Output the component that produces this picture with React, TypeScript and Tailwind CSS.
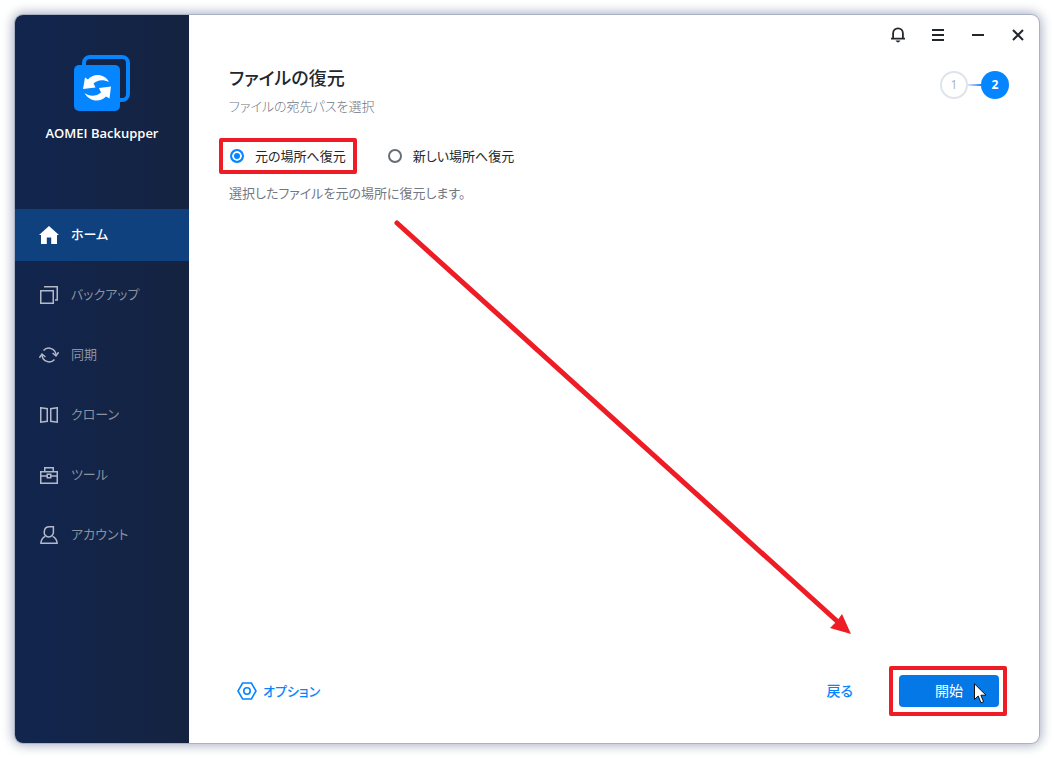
import { useState } from 'react';
import type { ReactNode } from 'react';

type NavEntry = { label: string; icon: ReactNode };

const iconClass = 'h-5 w-5 shrink-0';

const navEntries: NavEntry[] = [
  {
    label: 'ホーム',
    icon: (
      <svg viewBox="0 0 20 20" className={iconClass} fill="currentColor" aria-hidden="true">
        <path d="M10 1 L20 10 H18 V19 H12.2 V12.5 H7.8 V19 H2 V10 H0 Z" />
      </svg>
    ),
  },
  {
    label: 'バックアップ',
    icon: (
      <svg viewBox="0 0 20 20" className={iconClass} fill="none" stroke="currentColor" strokeWidth="1.5" aria-hidden="true">
        <path d="M1.75 5.75 H14.25 V18.25 H1.75 Z M5 1.75 H18.25 V15 H16" />
      </svg>
    ),
  },
  {
    label: '同期',
    icon: (
      <svg viewBox="0 0 20 20" className={iconClass} fill="none" stroke="currentColor" strokeWidth="1.5" aria-hidden="true">
        <path d="M4.5 5.5 A7.2 7.2 0 0 1 17 10 M15.5 14.5 A7.2 7.2 0 0 1 3 10" />
        <path d="M13.6 8 L17 11 L19.6 7.2 M0.4 12.8 L3 9 L6.4 12" />
      </svg>
    ),
  },
  {
    label: 'クローン',
    icon: (
      <svg viewBox="0 0 20 20" className={iconClass} fill="none" stroke="currentColor" strokeWidth="1.5" aria-hidden="true">
        <path d="M1.75 2.75 L8.25 3.75 V16.25 L1.75 17.25 Z M18.25 2.75 L11.75 3.75 V16.25 L18.25 17.25 Z" />
      </svg>
    ),
  },
  {
    label: 'ツール',
    icon: (
      <svg viewBox="0 0 20 20" className={iconClass} fill="none" stroke="currentColor" strokeWidth="1.5" aria-hidden="true">
        <path d="M1.75 6.75 H18.25 V18.25 H1.75 Z M5.75 6.5 V2.75 H14.25 V6.5 M2 11 H8 M12 11 H18 M8.25 9.25 H11.75 V12.75 H8.25 Z" />
      </svg>
    ),
  },
  {
    label: 'アカウント',
    icon: (
      <svg viewBox="0 0 20 20" className={iconClass} fill="none" stroke="currentColor" strokeWidth="1.5" aria-hidden="true">
        <path d="M14.4 1.75 V7 A4.6 4.6 0 1 1 5.3 6.5 Q5.6 1.75 10.5 1.75 Z" />
        <path d="M6.2 11.4 Q2.2 13.5 1.9 18.25 H18.1 Q17.8 13.5 13.6 11.4" />
      </svg>
    ),
  },
];

function Logo() {
  return (
    <svg viewBox="0 0 56 56" className="h-14 w-14" aria-hidden="true">
      <rect x="10" y="2" width="44" height="43" rx="6" fill="none" stroke="#0585ff" strokeWidth="4" />
      <rect x="0" y="10" width="46" height="46" rx="5" fill="#0585ff" />
      <path
        fill="#fff"
        d="M9 34 L11 22.5 L14 24.5 C19 18.5 30 18 35 27 C29 23.800 23 25 19.500 28.5 L21.5 32.5 Z M37 31.5 L35.5 43.5 L32 41.5 C26 48 15 46.5 10.5 38 C16 42 22 41.5 27 37.500 L25 33 Z"
      />
    </svg>
  );
}

function Sidebar() {
  const [active, setActive] = useState('ホーム');
  return (
    <aside className="flex w-[174px] shrink-0 flex-col bg-linear-to-r from-[#11254e] to-[#152340]">
      <div className="flex h-[194px] flex-col items-center pt-10">
        <Logo />
        <p className="mt-3 text-[13px] leading-5 font-semibold text-white">AOMEI Backupper</p>
      </div>
      <nav>
        <ul className="flex flex-col gap-2">
          {navEntries.map(({ label, icon }) => (
            <li key={label}>
              <button
                type="button"
                aria-current={active === label ? 'page' : undefined}
                onClick={() => setActive(label)}
                className={
                  active === label
                    ? 'flex h-13 w-full items-center gap-3 bg-[#0e417d] px-6 text-[13px] font-medium text-white'
                    : 'flex h-13 w-full items-center gap-3 px-6 text-[13px] text-[#8b929f]'
                }
              >
                <span className={active === label ? 'text-white' : 'text-[#b3b9c6]'}>{icon}</span>
                {label}
              </button>
            </li>
          ))}
        </ul>
      </nav>
    </aside>
  );
}

function WindowControls() {
  const button = 'flex h-10 w-10 items-center justify-center text-[#22272e]';
  return (
    <div className="flex justify-end pr-px">
      <button type="button" aria-label="通知" className={button}>
        <svg viewBox="0 0 16 16" className="h-4 w-4" fill="none" stroke="currentColor" strokeWidth="1.8" aria-hidden="true">
          <path d="M3.1 11.5 V6.2 A4.9 4.9 0 0 1 12.9 6.2 V11.5 M1 11.6 H15" />
          <path d="M5.5 13.5 H10.5 L9 15.3 H7 Z" fill="currentColor" stroke="none" />
        </svg>
      </button>
      <button type="button" aria-label="メニュー" className={button}>
        <svg viewBox="0 0 16 16" className="h-4 w-4" stroke="currentColor" strokeWidth="2" aria-hidden="true">
          <path d="M2 3 H14 M2 8 H14 M2 13 H14" />
        </svg>
      </button>
      <button type="button" aria-label="最小化" className={button}>
        <svg viewBox="0 0 16 16" className="h-4 w-4" stroke="currentColor" strokeWidth="2" aria-hidden="true">
          <path d="M2 8 H14" />
        </svg>
      </button>
      <button type="button" aria-label="閉じる" className={button}>
        <svg viewBox="0 0 16 16" className="h-4 w-4" stroke="currentColor" strokeWidth="2" aria-hidden="true">
          <path d="M3 3 L13 13 M13 3 L3 13" />
        </svg>
      </button>
    </div>
  );
}

function Steps() {
  return (
    <ol className="mt-2 flex items-center text-xs leading-4">
      <li className="flex h-7 w-7 items-center justify-center rounded-full border-2 border-[#dfe3ea] text-[#a9aeb8]">1</li>
      <li aria-hidden="true" className="h-0.5 w-[13px] bg-linear-to-r from-[#dfe3ea] to-[#0585ff]" />
      <li aria-current="step" className="flex h-7 w-7 items-center justify-center rounded-full bg-[#0585ff] font-bold text-white">2</li>
    </ol>
  );
}

type ChoiceProps = { label: string; checked: boolean; onSelect: () => void; highlighted?: boolean };

function Choice({ label, checked, onSelect, highlighted }: ChoiceProps) {
  return (
    <label className="relative flex items-center gap-[11px] text-[13px] leading-5 text-[#22272e]">
      <input
        type="radio"
        name="destination"
        checked={checked}
        onChange={onSelect}
        className="h-3.5 w-3.5 appearance-none rounded-full border-2 border-[#686d76] bg-white checked:border-[#0585ff] checked:bg-[#0585ff] checked:shadow-[inset_0_0_0_2px_white]"
      />
      {label}
      {highlighted && (
        <span className="pointer-events-none absolute -inset-x-[11px] -inset-y-2 rounded-xs border-4 border-[#ee1c25]" />
      )}
    </label>
  );
}

function Footer() {
  return (
    <footer className="mt-auto flex items-center pr-10 pb-9 pl-12 leading-5">
      <button type="button" className="flex items-center gap-1.5 text-[13px] font-medium text-[#0585ff]">
        <svg viewBox="0 0 20 20" className={iconClass} fill="none" stroke="currentColor" strokeWidth="1.6" aria-hidden="true">
          <path d="M5.6 2 H14.4 L19 10 L14.4 18 H5.6 L1 10 Z" />
          <circle cx="10" cy="10" r="3.2" />
        </svg>
        オプション
      </button>
      <button type="button" className="ml-auto text-sm font-medium text-[#0585ff]">
        戻る
      </button>
      <div className="relative ml-[46px]">
        <button type="button" className="h-8 w-[100px] rounded bg-[#0578e8] text-sm text-white">
          開始
        </button>
        <span className="pointer-events-none absolute -inset-y-[9px] -right-2 -left-2.5 rounded-xs border-4 border-[#ee1c25]" />
        <svg viewBox="0 0 13 21" className="pointer-events-none absolute top-2 left-[75px] h-[21px] w-[13px]" aria-hidden="true">
          <path d="M0.5 0.8 V16.5 L4.2 13 L7 19.8 L9.6 18.7 L6.9 12.2 H12 Z" fill="#fff" stroke="#111" strokeWidth="1" />
        </svg>
      </div>
    </footer>
  );
}

export default function App() {
  const [destination, setDestination] = useState<'original' | 'new'>('original');
  return (
    <div className="flex min-h-screen bg-white p-[15px] font-['Open_Sans','Noto_Sans_CJK_JP',sans-serif] [font-feature-settings:'palt']">
      <div className="relative flex flex-1 overflow-hidden rounded-lg bg-white shadow-[0_0_0_1px_#a9b2c3,0_0_12px_2px_#a3abbd]">
        <Sidebar />
        <main className="flex min-w-0 flex-1 flex-col">
          <WindowControls />
          <header className="flex items-start justify-between pt-2 pr-[30px] pl-10">
            <div className="pt-px">
              <h1 className="text-lg leading-7 font-medium text-[#22272e]">ファイルの復元</h1>
              <p className="mt-1 text-[13px] leading-5 font-light text-[#6f7682]">ファイルの宛先パスを選択</p>
            </div>
            <Steps />
          </header>
          <section className="mt-[30px] px-10">
            <div role="radiogroup" aria-label="復元先" className="flex gap-[42px] pl-px">
              <Choice
                label="元の場所へ復元"
                checked={destination === 'original'}
                onSelect={() => setDestination('original')}
                highlighted
              />
              <Choice
                label="新しい場所へ復元"
                checked={destination === 'new'}
                onSelect={() => setDestination('new')}
              />
            </div>
            <p className="mt-[17px] text-[13px] leading-5 text-[#727985]">選択したファイルを元の場所に復元します。</p>
          </section>
          <Footer />
        </main>
        <svg
          viewBox="0 0 458 416"
          className="pointer-events-none absolute right-[187px] bottom-[108px] h-[416px] w-[458px]"
          aria-hidden="true"
        >
          <path d="M3 4 L444 403" stroke="#ee1c25" strokeWidth="5" strokeLinecap="round" />
          <path d="M457 415 L448 395 L443 402 L436 409 Z" fill="#ee1c25" />
        </svg>
      </div>
    </div>
  );
}
